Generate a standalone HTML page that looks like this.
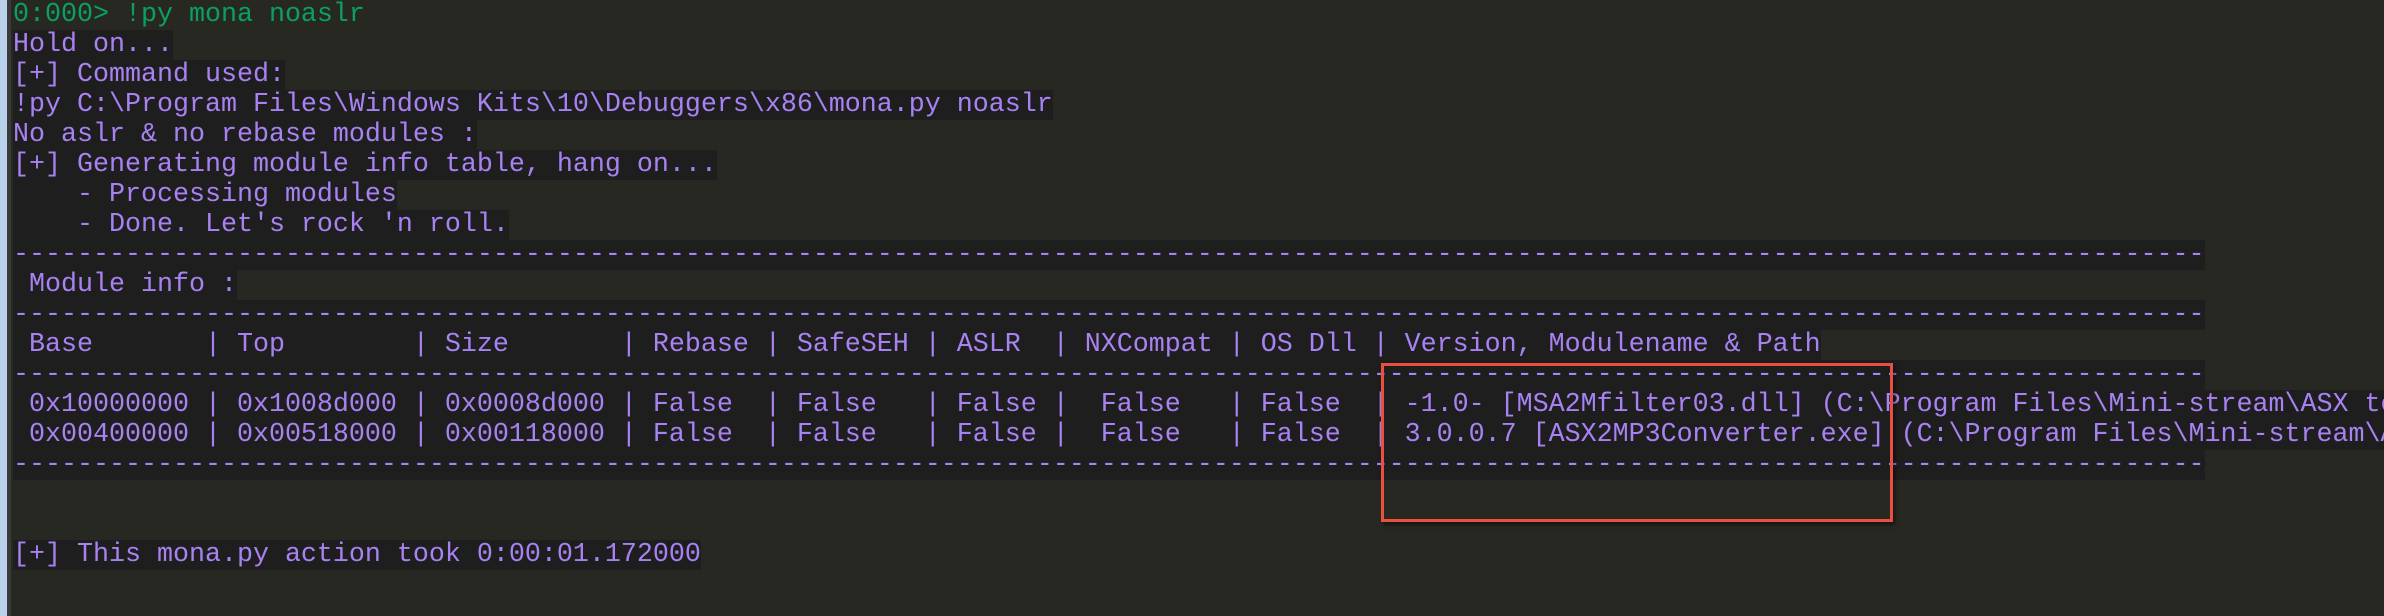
<!DOCTYPE html>
<html><head><meta charset="utf-8"><style>
html,body{margin:0;padding:0;width:2384px;height:616px;overflow:hidden;background:#282822;}
.strip{position:absolute;left:0;top:0;width:7px;height:616px;background:#b9d1ea;}
.strip2{position:absolute;left:7px;top:0;width:4px;height:616px;background:#3a3a3a;}
.con{position:absolute;left:13px;top:0;width:2371px;height:616px;overflow:hidden;font-family:"Liberation Mono",monospace;font-size:26.67px;line-height:30px;color:#a882f2;}
.l{height:30px;white-space:pre;}
.l span{background:#1e1e1e;}
.g{color:#0aa060;}
.box{position:absolute;left:1381px;top:363px;width:506px;height:153px;border:3px solid #e9503f;box-shadow:2px 3px 4px rgba(0,0,0,.5);}
</style></head><body>
<div class="strip"></div><div class="strip2"></div>
<div class="con"><div class="l g">0:000&gt; !py mona noaslr</div><div class="l"><span>Hold on...</span></div><div class="l"><span>[+] Command used:</span></div><div class="l"><span>!py C:\Program Files\Windows Kits\10\Debuggers\x86\mona.py noaslr</span></div><div class="l"><span>No aslr &amp; no rebase modules :</span></div><div class="l"><span>[+] Generating module info table, hang on...</span></div><div class="l"><span>    - Processing modules</span></div><div class="l"><span>    - Done. Let's rock 'n roll.</span></div><div class="l"><span>-----------------------------------------------------------------------------------------------------------------------------------------</span></div><div class="l"><span> Module info :</span></div><div class="l"><span>-----------------------------------------------------------------------------------------------------------------------------------------</span></div><div class="l"><span> Base       | Top        | Size       | Rebase | SafeSEH | ASLR  | NXCompat | OS Dll | Version, Modulename &amp; Path</span></div><div class="l"><span>-----------------------------------------------------------------------------------------------------------------------------------------</span></div><div class="l"><span> 0x10000000 | 0x1008d000 | 0x0008d000 | False  | False   | False |  False   | False  | -1.0- [MSA2Mfilter03.dll] (C:\Program Files\Mini-stream\ASX to MP3 Converter\MSA2Mfilter03.dll)</span></div><div class="l"><span> 0x00400000 | 0x00518000 | 0x00118000 | False  | False   | False |  False   | False  | 3.0.0.7 [ASX2MP3Converter.exe] (C:\Program Files\Mini-stream\ASX to MP3 Converter\ASX2MP3Converter.exe)</span></div><div class="l"><span>-----------------------------------------------------------------------------------------------------------------------------------------</span></div><div class="l"></div><div class="l"></div><div class="l"><span>[+] This mona.py action took 0:00:01.172000</span></div></div>
<div class="box"></div>
</body></html>
